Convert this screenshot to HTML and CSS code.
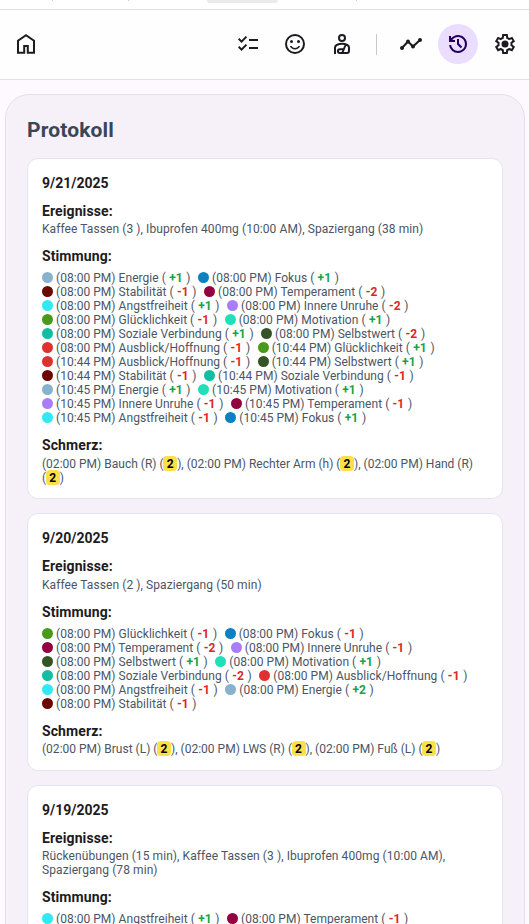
FILE: index.html
```html
<!DOCTYPE html>
<html lang="de">
<head>
<meta charset="utf-8">
<title>Protokoll</title>
<link rel="stylesheet" href="styles.css">
</head>
<body>
<div class="strip"><i class="tick"></i><i class="tick"></i><i class="tab"></i><i class="tick"></i></div>
<header class="bar">
  <a class="btn"><svg viewBox="0 0 24 24"><path class="line" d="M4 20.800V8.700l8-5.500 8 5.500v12.100h-6.200V14h-3.600v6.800Z"/></svg></a>
  <nav class="nav">
    <a class="btn"><svg viewBox="0 0 24 24"><path d="M5.55 19 2 15.45l1.4-1.4 2.125 2.125 4.25-4.25 1.4 1.425L5.55 19Zm0-8L2 7.45l1.4-1.4 2.125 2.125 4.25-4.25 1.4 1.425L5.55 11ZM13 17v-2h9v2h-9Zm0-8V7h9v2h-9Z"/></svg></a>
    <a class="btn"><svg viewBox="0 0 24 24"><circle class="line" cx="12" cy="12" r="9"/><circle cx="8.5" cy="9.5" r="1.5"/><circle cx="15.5" cy="9.5" r="1.5"/><path d="M12 17.5c2.33 0 4.32-1.45 5.12-3.5h-1.67c-.7 1.19-1.97 2-3.45 2s-2.76-.81-3.45-2H6.88c.8 2.05 2.79 3.5 5.12 3.5z"/></svg></a>
    <a class="btn"><svg viewBox="0 0 24 24"><circle class="line" cx="12" cy="6" r="3"/><path class="line" d="M5 22v-6.500c0-1.200.7-2 1.700-2.500 3.400-1.500 7.200-1.500 10.600 0 1 .5 1.700 1.300 1.700 2.500V19c0 1.200-.8 2-2 2H9.800a1.900 1.900 0 0 1 0-3.800h3.500M15.700 12.500l-3.400 8.500"/></svg></a>
    <span class="sep"></span>
    <a class="btn"><svg viewBox="0 0 24 24"><path class="line" d="m3 16 6-6.500 5 5L21 8"/><circle cx="3" cy="16" r="2"/><circle cx="9" cy="9.500" r="2"/><circle cx="14" cy="14.500" r="2"/><circle cx="21" cy="8" r="2"/></svg></a>
    <a class="btn active"><svg viewBox="0 0 24 24"><path d="M12 21q-3.450 0-6.012-2.287T3.050 13H5.100q.35 2.600 2.312 4.300T12 19q2.925 0 4.963-2.037T19 12t-2.037-4.962T12 5q-1.725 0-3.225.8T6.250 8H9v2H3V4h2v2.350q1.275-1.600 3.113-2.475T12 3q1.875 0 3.513.713t2.850 1.924 1.925 2.850T21 12t-.712 3.513-1.925 2.850-2.850 1.925T12 21m2.800-4.800L11 12.400V7h2v4.600l3.200 3.200z"/></svg></a>
    <a class="btn"><svg viewBox="0 0 24 24"><path d="m9.250 22-.4-3.200q-.325-.125-.612-.3t-.563-.375L4.700 19.375l-2.750-4.750 2.575-1.950Q4.500 12.500 4.500 12.337v-.675q0-.162.025-.337L1.950 9.375l2.750-4.750 2.975 1.250q.275-.2.575-.375t.6-.3l.4-3.200h5.500l.4 3.200q.325.125.613.3t.562.375l2.975-1.250 2.750 4.750-2.575 1.950q.025.175.025.338v.674q0 .163-.05.338l2.575 1.950-2.750 4.750-2.950-1.250q-.275.2-.575.375t-.6.3l-.4 3.200h-5.500Zm1.750-2h1.975l.35-2.650q.775-.2 1.438-.587t1.212-.938l2.475 1.025.975-1.700-2.150-1.625q.125-.35.175-.737T17.500 12t-.05-.787-.175-.738l2.150-1.625-.975-1.700-2.475 1.050q-.55-.575-1.212-.962t-1.438-.588L13 4h-1.975l-.35 2.650q-.775.2-1.437.588t-1.213.937L5.550 7.150l-.975 1.700 2.150 1.600q-.125.375-.175.750t-.05.800q0 .4.05.775t.175.750l-2.150 1.625.975 1.700 2.475-1.050q.55.575 1.213.963t1.437.587L11 20Z"/><circle cx="12" cy="12" r="3.500"/></svg></a>
  </nav>
</header>
<main class="panel">
  <h1>Protokoll</h1>
  <div id="days"></div>
</main>
<script src="app.js"></script>
</body>
</html>
```
FILE: styles.css
```css
* { box-sizing: border-box; }
html { height: 100%; overflow: hidden; }
body { margin: 0; height: 924px; overflow: hidden; background: #fef9ff; font-family: Roboto, sans-serif; color: #1d1b20; }
.strip { height: 10px; background: #fff; border-bottom: 1px solid #dedede; display: grid; grid-template-columns: 52px 76px 79px 71px 78px 1fr; align-items: start; }
.tick { width: 1px; height: 1px; background: #ccc; justify-self: start; }
.tick:first-child { grid-column: 2; }
.tab { height: 3px; background: #ebebeb; border-radius: 0 0 5px 5px; }
.tick:last-child { grid-column: 6; }
.bar { height: 70px; background: #fefefe; border-bottom: 1px solid #e3e1e5; display: flex; justify-content: space-between; align-items: center; padding: 0 4px 1px 6px; }
.nav { display: flex; align-items: center; gap: 7px; }
.btn { width: 40px; height: 40px; border-radius: 50%; display: grid; place-items: center; }
.btn svg { width: 24px; height: 24px; fill: #1d1b20; }
.btn .line { fill: none; stroke: #1d1b20; stroke-width: 2; }
.btn.active { background: #eaddff; }
.btn.active svg { fill: #21005d; }
.sep { width: 1px; height: 21px; background: #cac7cd; margin: 0 7px; }
.panel { margin: 14px 4px 0 5px; padding: 21px 21px; height: 1000px; background: #f6f1f9; border: 1px solid #e5deeb; border-radius: 24px; }
h1 { margin: 0 0 14px; font-size: 21px; line-height: 28px; font-weight: 700; letter-spacing: .15px; color: #3b4558; }
.card { background: #fff; border: 1px solid #e5e4ee; border-radius: 11px; padding: 14px; margin-bottom: 14px; }
.date { font-size: 14px; line-height: 20px; font-weight: 700; margin-bottom: 8px; }
h3 { margin: 0 0 1px; font-size: 14px; line-height: 20px; font-weight: 700; letter-spacing: .1px; }
.wide h3 { margin-bottom: 2px; }
section { margin-bottom: 10px; }
section:last-child { margin-bottom: 0; }
section.wide:last-child { margin-bottom: -1px; }
.text, .row { font-size: 12px; line-height: 14px; color: #4b5565; white-space: nowrap; letter-spacing: .01px; }
.events .text { letter-spacing: .08px; }
.moods h3 { margin-bottom: 5px; }
.row { display: flex; gap: 7.5px; height: 14px; letter-spacing: .04px; }
.mood { display: flex; align-items: center; white-space: pre; }
.dot { width: 11px; height: 11px; border-radius: 50%; margin: 0 3px 1px 0; }
.pos, .neg { font-weight: 700; padding: 0 3.7px 0 3.3px; }
.pos { color: #16a34a; }
.neg { color: #dc2626; }
.pain { display: inline-block; width: 14px; height: 15px; line-height: 16px; margin: -1px 0 0 -0.5px; text-align: center; vertical-align: top; background: #fddf47; border-radius: 4px; color: #000; font-weight: 700; }
```
FILE: app.js
```js
const colors = {
  'Energie': '#87b2ce', 'Fokus': '#0b80c3', 'Stabilität': '#6b0800', 'Temperament': '#94003f',
  'Angstfreiheit': '#2eeaf5', 'Innere Unruhe': '#a97df8', 'Glücklichkeit': '#4b991b',
  'Motivation': '#21dfb8', 'Soziale Verbindung': '#10bea3', 'Selbstwert': '#365326', 'Ausblick/Hoffnung': '#df3132'
};
const days = [
  { date: '9/21/2025', events: ['Kaffee Tassen (3 ), Ibuprofen 400mg (10:00 AM), Spaziergang (38 min)'],
    moods: [
      '08:00 Energie +1|08:00 Fokus +1', '08:00 Stabilität -1|08:00 Temperament -2',
      '08:00 Angstfreiheit +1|08:00 Innere Unruhe -2', '08:00 Glücklichkeit -1|08:00 Motivation +1',
      '08:00 Soziale Verbindung +1|08:00 Selbstwert -2', '08:00 Ausblick/Hoffnung -1|10:44 Glücklichkeit +1',
      '10:44 Ausblick/Hoffnung -1|10:44 Selbstwert +1', '10:44 Stabilität -1|10:44 Soziale Verbindung -1',
      '10:45 Energie +1|10:45 Motivation +1', '10:45 Innere Unruhe -1|10:45 Temperament -1',
      '10:45 Angstfreiheit -1|10:45 Fokus +1'],
    pains: ['(02:00 PM) Bauch (R) ([2]), (02:00 PM) Rechter Arm (h) ([2]), (02:00 PM) Hand (R)', '([2])'], wide: 'pains' },
  { date: '9/20/2025', events: ['Kaffee Tassen (2 ), Spaziergang (50 min)'],
    moods: [
      '08:00 Glücklichkeit -1|08:00 Fokus -1', '08:00 Temperament -2|08:00 Innere Unruhe -1',
      '08:00 Selbstwert +1|08:00 Motivation +1', '08:00 Soziale Verbindung -2|08:00 Ausblick/Hoffnung -1',
      '08:00 Angstfreiheit -1|08:00 Energie +2', '08:00 Stabilität -1'],
    pains: ['(02:00 PM) Brust (L) ([2]), (02:00 PM) LWS (R) ([2]), (02:00 PM) Fuß (L) ([2])'], wide: 'events' },
  { date: '9/19/2025', events: ['Rückenübungen (15 min), Kaffee Tassen (3 ), Ibuprofen 400mg (10:00 AM),', 'Spaziergang (78 min)'],
    moods: ['08:00 Angstfreiheit +1|08:00 Temperament -1'], pains: [] }
];
const mood = s => {
  const [, time, name, val] = s.match(/^(\S+) (.+) ([+-]\d)$/);
  return `<span class="mood"><i class="dot" style="background:${colors[name]}"></i>(${time} PM) ${name} (<b class="${val[0] === '+' ? 'pos' : 'neg'}">${val}</b>)</span>`;
};
const lines = a => a.map(t => `<div class="text">${t.replace(/\[(\d)\]/g, '<b class="pain">$1</b>')}</div>`).join('');
document.getElementById('days').innerHTML = days.map(d => `
<article class="card">
  <div class="date">${d.date}</div>
  <section class="events${d.wide === 'events' ? ' wide' : ''}"><h3>Ereignisse:</h3>${lines(d.events)}</section>
  <section class="moods"><h3>Stimmung:</h3>${d.moods.map(r => `<div class="row">${r.split('|').map(mood).join('')}</div>`).join('')}</section>
  ${d.pains.length ? `<section class="${d.wide === 'pains' ? 'wide' : ''}"><h3>Schmerz:</h3>${lines(d.pains)}</section>` : ''}
</article>`).join('');
```
